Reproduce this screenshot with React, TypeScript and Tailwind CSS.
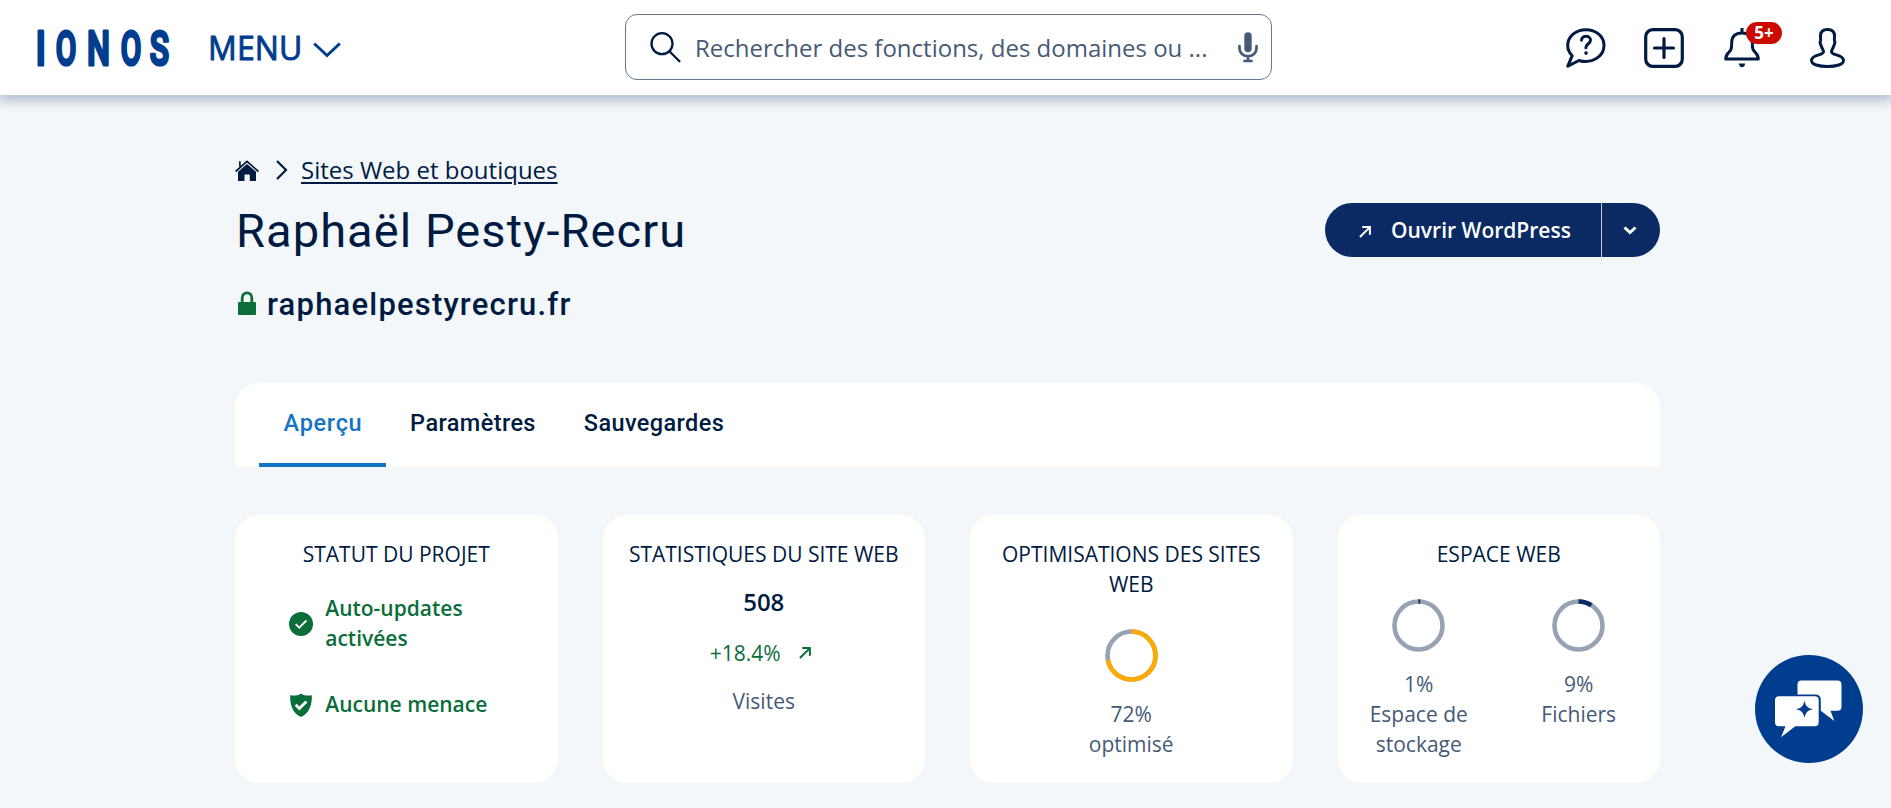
import React from 'react';

const tabs = [
  { name: 'Aperçu', className: 'w-[127px] border-[#1474c4] pl-px text-[#1474c4] tracking-[0.7px]' },
  { name: 'Paramètres', className: 'w-[173px] border-transparent pl-px tracking-[0.4px]' },
  { name: 'Sauvegardes', className: 'w-[190px] border-transparent tracking-[0.4px]' },
];

const Logo = () => (
  <svg width="140" height="64" viewBox="-2 -10 140 64" className="-ml-0.5 shrink-0" aria-label="IONOS">
    <g
      fill="#003d8f"
      stroke="#003d8f"
      strokeWidth="3.2"
      strokeLinejoin="round"
      fontFamily="Roboto, sans-serif"
      fontWeight="500"
      fontSize="49"
      textAnchor="middle"
    >
      <text transform="translate(4.8 38.9) scale(.72 1)">I</text>
      <text transform="translate(30 38.9) scale(.61 1)">O</text>
      <text transform="translate(62.5 38.9) scale(.66 1)">N</text>
      <text transform="translate(95 38.9) scale(.61 1)">O</text>
      <text transform="translate(123.5 38.9) scale(.65 1)">S</text>
    </g>
  </svg>
);

const ArrowIcon = () => (
  <svg width="12" height="12" viewBox="0 0 13 13" fill="none" stroke="currentColor" strokeWidth="2.2">
    <path d="M1 12 11 2" />
    <path d="M3.5 1.2H11.8V9.5" />
  </svg>
);

const Ring = ({ value, color }: { value: number; color: string }) => (
  <svg width="53" height="53" viewBox="0 0 53 53" fill="none" strokeWidth="4.6">
    <circle cx="26.5" cy="26.5" r="24" stroke="#97a3b4" />
    <circle
      cx="26.5"
      cy="26.5"
      r="24"
      stroke={color}
      pathLength="100"
      strokeDasharray={`${value} 100`}
      transform="rotate(-90 26.5 26.5)"
    />
  </svg>
);

const Card = ({ title, children }: { title: string; children: React.ReactNode }) => (
  <section className="flex h-[268px] flex-col items-center rounded-3xl bg-white px-6 pt-6 text-center text-[21px] leading-[30px] text-[#465a75]">
    <h3 className="text-[#001b41]">{title}</h3>
    {children}
  </section>
);

const Header = () => (
  <header className="relative grid h-[95px] grid-cols-[625px_647px_1fr] items-center bg-white shadow-[0_3px_12px_2px_rgba(20,40,85,0.3)]">
    <div className="flex items-center pl-9">
      <Logo />
      <button className="ml-[34px] flex items-center text-[#003d8f]">
        <span className="pt-px text-[32px] leading-10 tracking-[0.1px] [-webkit-text-stroke:0.9px_#003d8f]">MENU</span>
        <svg className="ml-[11px] mt-1" width="28" height="16" viewBox="0 0 28 16" fill="none" stroke="currentColor" strokeWidth="3">
          <path d="m1.2 1.5 12.8 12 12.8-12" />
        </svg>
      </button>
    </div>

    <div className="mb-px flex h-[66px] items-center rounded-xl border border-[#66788f] pl-6 pr-[13px] text-[#465a75]">
      <svg width="31" height="31" viewBox="0 0 31 31" fill="none" stroke="#001b41" strokeWidth="2.3" strokeLinecap="round">
        <circle cx="12" cy="11.7" r="10.5" />
        <path d="m19.4 19.2 10 10" />
      </svg>
      <span className="ml-3.5 flex-1 whitespace-nowrap pt-0.5 text-2xl">Rechercher des fonctions, des domaines ou ...</span>
      <svg width="20" height="31" viewBox="0 0 20 31" fill="none" stroke="currentColor">
        <rect x="6.3" y=".2" width="7.4" height="20" rx="3.7" fill="currentColor" stroke="none" />
        <path d="M1.5 14v2.5a8.5 7.8 0 0 0 17 0V14M10 24v4M6.5 29h7" strokeWidth="2.7" strokeLinecap="round" />
      </svg>
    </div>

    <div className="flex items-center justify-end pr-[46px] text-[#001b41]">
      <svg width="40" height="40" viewBox="0 0 40 40" fill="none" stroke="currentColor" strokeWidth="3" strokeLinejoin="round" strokeLinecap="round">
        <path d="M13 32.5C25 36.3 38 29 38 17.5 38 8.5 30 1.7 20 1.7S1.7 8.5 1.7 17.5c0 4 1.6 7.3 4.5 10.2L1.8 38.2 13 32.5Z" />
        <path d="M15.5 12.2c.4-5.2 9-5.1 9 0 0 3.6-4.6 3.5-4.6 7.5" />
        <circle cx="20" cy="25.1" r="1.8" fill="currentColor" stroke="none" />
      </svg>
      <svg className="ml-[38px]" width="40" height="40" viewBox="0 0 40 40" fill="none" stroke="currentColor" strokeWidth="3.2" strokeLinecap="round">
        <rect x="1.7" y="1.7" width="36.6" height="36.6" rx="7" />
        <path d="M20 10.5v19M10.5 20h19" />
      </svg>
      <div className="relative ml-10">
        <svg width="36" height="40" viewBox="0 0 36 40" fill="none" stroke="currentColor" strokeWidth="3" strokeLinejoin="round">
          <path d="M18 0v5M18 5C11 5 7.7 9 7.7 14.5c0 6.5-.5 7.5-3.3 10.3-2.3 2.2-2.7 3.8-2.7 6.3h32.6c0-2.5-.4-4.1-2.7-6.3-2.8-2.8-3.3-3.8-3.3-10.3C28.3 9 25 5 18 5Z" />
          <path d="M15 35.5h6c0 5-6 5-6 0Z" fill="currentColor" stroke="none" />
        </svg>
        <span className="absolute -top-1.5 left-[22px] flex h-[22px] w-9 items-center justify-center rounded-full bg-[#cc0a00] text-[17px] leading-none font-bold text-white">
          5+
        </span>
      </div>
      <svg className="ml-[50px]" width="35" height="40" viewBox="0 0 35 40" fill="none" stroke="currentColor" strokeWidth="3" strokeLinejoin="round">
        <path d="M17.5 1.5c-4.6 0-7 2.4-7 6.5 0 1.5.2 3 .1 4.2-.9 1.4-.4 3.6.6 5.6.4 2.4 2.3 4 2.3 6 0 3.9-12 2.3-12 8.6 0 4.1 7.5 6.1 16 6.1s16-2 16-6.1c0-6.3-12-4.7-12-8.6 0-2 1.9-3.6 2.3-6 1-2 1.5-4.2.6-5.6-.1-1.2.1-2.7.1-4.2 0-4.1-2.4-6.5-7-6.5Z" />
      </svg>
    </div>
  </header>
);

const App = () => {
  return (
    <div className="h-[808px] overflow-hidden bg-[#f3f7fa] font-['Open_Sans',sans-serif] text-[#001b41]">
      <Header />

      <main className="ml-[235px] w-[1425px] pt-[57px]">
        <nav className="flex h-9 items-center text-2xl">
          <svg width="24" height="21" viewBox="0 0 24 21" fill="currentColor">
            <path d="M12 4 21 11.8V21h-6.2v-6.5H9.5V21H3v-9.2Z" />
            <path d="M.6 11.5 12 1.4l11.4 10.1M4.9 6.5V1.3" fill="none" stroke="currentColor" strokeWidth="1.7" />
          </svg>
          <svg className="ml-[17px]" width="12" height="20" viewBox="0 0 12 20" fill="none" stroke="currentColor" strokeWidth="2.2">
            <path d="m1 1 9 9-9 9" />
          </svg>
          <a href="#sites" className="ml-[13px] underline decoration-2 underline-offset-[3px]">
            Sites Web et boutiques
          </a>
        </nav>

        <div className="mt-[9px] flex h-[66px] items-center justify-between">
          <h1 className="ml-px pt-px font-[Roboto,sans-serif] text-[47px] leading-[66px] tracking-[1.07px]">Raphaël Pesty-Recru</h1>
          <div className="flex h-[54px] items-center rounded-full bg-[#0b2a63] text-white">
            <button className="flex h-full w-[276px] items-center pt-0.5 pl-[34px] text-[21px] font-semibold">
              <span className="mt-0.5">
                <ArrowIcon />
              </span>
              <span className="ml-5 whitespace-nowrap">Ouvrir WordPress</span>
            </button>
            <button className="flex h-full w-[59px] items-center justify-center border-l border-[#c3cbd8] pr-0.5">
              <svg width="14" height="9" viewBox="0 0 14 9" fill="none" stroke="currentColor" strokeWidth="3">
                <path d="m1.5 1.5 5.5 5 5.5-5" />
              </svg>
            </button>
          </div>
        </div>

        <div className="mt-[18px] flex h-12 items-center">
          <svg className="ml-[3px] -mt-1" width="18" height="24" viewBox="0 0 18 24">
            <path d="M4.2 12V7a4.8 5.2 0 0 1 9.6 0v5" fill="none" stroke="#0b6e3a" strokeWidth="2.8" />
            <rect y="11" width="18" height="13" rx="1" fill="#0b6e3a" />
          </svg>
          <span className="ml-[11px] font-[Roboto,sans-serif] text-[31px] font-medium tracking-[1.2px]">raphaelpestyrecru.fr</span>
        </div>

        <div className="mt-[54px] flex h-[84px] rounded-t-3xl bg-white pl-6">
          {tabs.map((tab) => (
            <button
              key={tab.name}
              className={`border-b-4 pt-0.5 text-center font-[Roboto,sans-serif] text-[23.5px] font-medium ${tab.className}`}
            >
              {tab.name}
            </button>
          ))}
        </div>

        <div className="mt-12 grid grid-cols-4 gap-[45px]">
          <Card title="STATUT DU PROJET">
            <div className="mt-6 flex w-[214px] flex-col gap-9 text-left font-semibold text-[#0b6e3a]">
              <div className="flex items-center gap-3">
                <svg className="mt-0.5 shrink-0" width="24" height="24" viewBox="0 0 24 24">
                  <circle cx="12" cy="12" r="12" fill="currentColor" />
                  <path d="m6.7 12.2 3.5 3.5 7.2-7.2" fill="none" stroke="white" strokeWidth="1.8" />
                </svg>
                <span>
                  Auto-updates
                  <br />
                  activées
                </span>
              </div>
              <div className="flex items-center gap-3">
                <svg className="mt-0.5 shrink-0" width="24" height="24" viewBox="0 0 24 24">
                  <path d="M12 .5c2.6 2 6 2.6 10.8 1.7C23.3 12 20 20.5 12 24 4 20.5.7 12 1.2 2.2 6 3.1 9.4 2.5 12 .5Z" fill="currentColor" />
                  <path d="m6.7 11.8 3.7 3.7 7-7" fill="none" stroke="white" strokeWidth="2.8" />
                </svg>
                <span className="whitespace-nowrap">Aucune menace</span>
              </div>
            </div>
          </Card>

          <Card title="STATISTIQUES DU SITE WEB">
            <p className="mt-[15px] text-2xl leading-9 font-semibold text-[#001b41]">508</p>
            <p className="mt-[18px] flex items-center gap-[18px] pr-[7px] text-[#0b6e3a]">
              +18.4% <ArrowIcon />
            </p>
            <p className="mt-[18px]">Visites</p>
          </Card>

          <Card title="OPTIMISATIONS DES SITES WEB">
            <div className="mt-[30px] mb-[17px]">
              <Ring value={72} color="#ffaa00" />
            </div>
            <p>72%</p>
            <p>optimisé</p>
          </Card>

          <Card title="ESPACE WEB">
            <div className="mt-[30px] flex gap-10">
              <div className="flex w-[120px] flex-col items-center">
                <Ring value={1.2} color="#0b2a63" />
                <p className="mt-[17px]">1%</p>
                <p>Espace de stockage</p>
              </div>
              <div className="flex w-[120px] flex-col items-center">
                <Ring value={9} color="#0b2a63" />
                <p className="mt-[17px]">9%</p>
                <p>Fichiers</p>
              </div>
            </div>
          </Card>
        </div>
      </main>

      {/* Chat button */}
      <button className="fixed right-7 bottom-[45px] flex size-[108px] items-center justify-center rounded-full bg-[#003d8f]">
        <svg width="108" height="108" viewBox="0 0 108 108">
          <path d="M46.5 25.5h36a4 4 0 0 1 4 4v22.3a4 4 0 0 1-4 4h-7L79.3 66 65.8 55.8V44.5a5 5 0 0 0-5-5H42.5V29.5a4 4 0 0 1 4-4Z" fill="white" />
          <path d="M24 41.2h35.7a4 4 0 0 1 4 4v22a4 4 0 0 1-4 4H40.3L26 82.3l4.5-11.1H24a4 4 0 0 1-4-4v-22a4 4 0 0 1 4-4Z" fill="white" />
          <path d="M49.5 45.5c1.2 5.8 3 7.6 8.5 8.8-5.5 1.2-7.3 3-8.5 8.8-1.2-5.8-3-7.6-8.5-8.8 5.5-1.2 7.3-3 8.5-8.8Z" fill="#003d8f" />
        </svg>
      </button>
    </div>
  );
};

export default App;
